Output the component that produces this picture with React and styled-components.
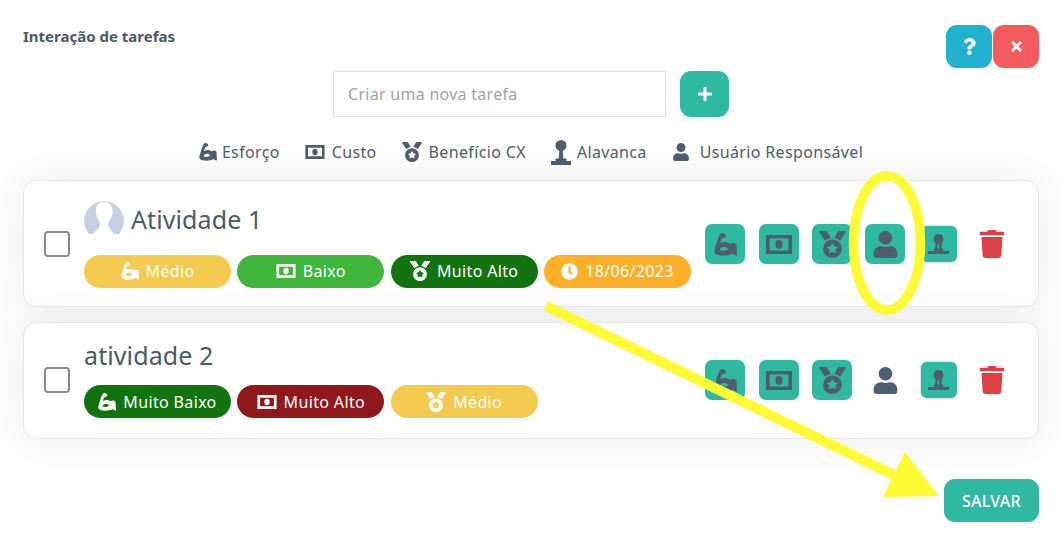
import React from "react";
import styled, { createGlobalStyle } from "styled-components";
import { FaMedal, FaUser, FaTrash, FaClock, FaPlus, FaTimes, FaQuestion } from "react-icons/fa";

const Global = createGlobalStyle`
  html, body { margin: 0; padding: 0; background: #fff; }
  body { font-family: "Noto Sans", "Open Sans", sans-serif; color: #4a5a6b; overflow: hidden; }
  * { box-sizing: border-box; }
  input::placeholder { color: #a0a3a6; opacity: 1; }
`;

const Page = styled.div`
  position: relative;
  width: 1060px;
  height: 546px;
  padding: 25px 21px 24px 23px;
  display: flex;
  flex-direction: column;
  overflow: hidden;
`;
const Header = styled.header`
  display: flex;
  justify-content: space-between;
  align-items: flex-start;
  height: 46px;
`;
const Heading = styled.h1`
  margin: 2px 0 0;
  font-size: 15px;
  line-height: 18px;
  font-weight: 700;
  color: #4b5968;
`;
const HeaderButtons = styled.div`
  display: flex;
  gap: 1px;
`;
const SquareButton = styled.button`
  width: ${(p) => p.$w}px;
  height: ${(p) => p.$h}px;
  border: 0;
  border-radius: 11px;
  padding: 0;
  background: ${(p) => p.$bg};
  color: #fff;
  display: flex;
  align-items: center;
  justify-content: center;
  font-size: ${(p) => p.$size}px;
`;
const NewTask = styled.div`
  display: flex;
  justify-content: center;
  gap: 14px;
`;
const TaskInput = styled.input`
  width: 333px;
  height: 46px;
  border: 1px solid #dfe1e5;
  padding: 0 14px;
  font: 400 16px "Noto Sans", sans-serif;
  letter-spacing: 0.28px;
  background: #fff;
  outline: 0;
`;
const Legend = styled.div`
  display: flex;
  justify-content: center;
  align-items: center;
  gap: 25px;
  height: 24px;
  margin-top: 23px;
  margin-bottom: 16px;
`;
const LegendItem = styled.span`
  display: flex;
  align-items: center;
  gap: ${(p) => p.$gap || 7}px;
  font-size: 16px;
  letter-spacing: 0.35px;
  color: #4f5e6e;
  white-space: nowrap;
`;
const CardList = styled.div`
  display: flex;
  flex-direction: column;
  gap: 15px;
`;
const Card = styled.article`
  display: flex;
  align-items: center;
  height: ${(p) => p.$h}px;
  padding: ${(p) => p.$pt}px 26px ${(p) => p.$pb}px 20px;
  background: #fff;
  border: 1px solid #e6e7e9;
  border-radius: 13px;
  box-shadow: 0 0 50px rgba(0, 0, 0, 0.08);
`;
const Check = styled.span`
  flex: none;
  width: 26px;
  height: 26px;
  border: 2px solid #8b8b8b;
  border-radius: 4px;
  background: #fff;
`;
const Content = styled.div`
  flex: 1;
  margin: 0 14px;
  display: flex;
  flex-direction: column;
  gap: 14px;
`;
const TitleRow = styled.div`
  display: flex;
  align-items: center;
  gap: 7px;
`;
const Title = styled.h2`
  margin: 0;
  padding-bottom: 2px;
  font-size: 25px;
  line-height: 27px;
  font-weight: 400;
  letter-spacing: 0.1px;
  color: #4a5a6b;
`;
const Tags = styled.div`
  display: flex;
  gap: 6.33px;
`;
const Tag = styled.span`
  width: 147px;
  height: 33px;
  border-radius: 17px;
  background: ${(p) => p.$bg};
  color: #fff;
  display: flex;
  align-items: center;
  justify-content: center;
  gap: 7px;
  font-size: 16px;
  letter-spacing: 0.35px;
  white-space: nowrap;
`;
const Actions = styled.div`
  display: flex;
  align-items: center;
  gap: 13.33px;
`;
const ActionButton = styled.button`
  flex: none;
  width: 40px;
  height: 40px;
  padding: 0;
  border: 0;
  border-radius: 7px;
  background: ${(p) => (p.$plain ? "transparent" : "#2fb9a1")};
  color: #4f5e6e;
  display: flex;
  align-items: center;
  justify-content: center;
`;
const StampButton = styled(ActionButton)`
  width: 38px;
  height: 38px;
  margin: 0 1px;
  border: 1px solid #dfe7e6;
`;
const TrashButton = styled(ActionButton)`
  background: transparent;
  color: #dc4045;
`;
const Footer = styled.div`
  margin-top: auto;
  display: flex;
  justify-content: flex-end;
`;
const SaveButton = styled.button`
  width: 95px;
  height: 43px;
  border: 0;
  border-radius: 11px;
  background: #2fb9a1;
  color: #fff;
  font: 500 16px "Noto Sans", sans-serif;
  letter-spacing: 0.3px;
`;
const Annotation = styled.svg`
  position: absolute;
  inset: 0;
  pointer-events: none;
`;

const Biceps = ({ size = 18 }) => (
  <svg width={size} height={size} viewBox="0 0 66 65" fill="currentColor">
    <path
      fillRule="evenodd"
      d="M20 0C27-1 34 2 34 8C34 12 28 13 24 15C20 18 19 24 19 29C26 24 38 24 46 31C50 26 60 26 64 32L66 64L57 62L55 58C40 66 14 66 6 60C0 56 0 48 4 40C8 26 12 8 20 0ZM18 44C26 37 36 38 41 46C33 51 24 52 18 49Z"
    />
  </svg>
);
const Money = ({ size = 20, h = 15 }) => (
  <svg width={size} height={h} viewBox="0 0 26 19" fill="currentColor">
    <path fillRule="evenodd" d="M0 0h26v19H0zM3.600 3.600v11.800h18.800V3.600z" />
    <ellipse cx="13" cy="9.500" rx="3.600" ry="4.400" />
  </svg>
);
const Stamp = () => (
  <svg width="21" height="20" viewBox="0 0 21 20" fill="currentColor">
    <circle cx="10.500" cy="5" r="5" />
    <path d="M7.500 9h2.200v6H7zM11.300 9h2.200l.5 6h-2.700zM6 14.500h9V17H6zM0 17h21v3H0z" />
  </svg>
);
const TallStamp = () => (
  <svg width="20" height="25" viewBox="0 0 20 25" fill="currentColor">
    <circle cx="10" cy="5.500" r="5.500" />
    <path d="M8.300 10h3.400l.6 9H7.700zM4.500 18.500h11V21h-11zM0 21h20v4H0z" />
  </svg>
);

const Avatar = () => (
  <svg width="40" height="40" viewBox="0 0 40 40" style={{ flex: "none" }}>
    <path d="M20 0a20 20 0 0 1 15.100 33H4.900A20 20 0 0 1 20 0z" fill="#c5d0e3" />
    <path
      d="M20 1C13 1 11.500 7 12 12C12.500 16 14 19 15.500 21C16.500 23 16 26 14 28C12 30 10 31 9 33H30C29 31 27 30 26 28C24 26 23.500 23 24.500 21C26 19 28 16 28.500 12C29 7 27 1 20 1Z"
      fill="#fff"
    />
  </svg>
);

const tagIcon = {
  effort: <Biceps size={18} />,
  cost: <Money size={20} h={14} />,
  benefit: <FaMedal size={20} />,
  date: <FaClock size={17} />,
};

const tasks = [
  {
    h: 127,
    pt: 1,
    pb: 0,
    title: "Atividade 1",
    avatar: true,
    tags: [
      ["effort", "Médio", "#f4cb50"],
      ["cost", "Baixo", "#40b63c"],
      ["benefit", "Muito Alto", "#13730f"],
      ["date", "18/06/2023", "#ffb02a"],
    ],
  },
  {
    h: 117,
    pt: 0,
    pb: 1,
    title: "atividade 2",
    plainUser: true,
    tags: [
      ["effort", "Muito Baixo", "#13730f"],
      ["cost", "Muito Alto", "#8e181c"],
      ["benefit", "Médio", "#f4cb50"],
    ],
  },
];

const legend = [
  [<Biceps size={18} />, "Esforço", 5],
  [<Money size={20} h={14} />, "Custo", 7],
  [<FaMedal size={20} />, "Benefício CX", 7],
  [<TallStamp />, "Alavanca", 6],
  [<FaUser size={18} />, "Usuário Responsável", 10],
];

export default function App() {
  return (
    <Page>
      <Global />
      <Header>
        <Heading>Interação de tarefas</Heading>
        <HeaderButtons>
          <SquareButton $w={46} $h={43} $bg="#22b1cf" $size={17}><FaQuestion /></SquareButton>
          <SquareButton $w={46} $h={43} $bg="#f45b5f" $size={15}><FaTimes /></SquareButton>
        </HeaderButtons>
      </Header>
      <NewTask>
        <TaskInput placeholder="Criar uma nova tarefa" />
        <SquareButton $w={49} $h={46} $bg="#2fb9a1" $size={16}><FaPlus /></SquareButton>
      </NewTask>
      <Legend>
        {legend.map(([icon, label, gap]) => (
          <LegendItem key={label} $gap={gap}>{icon}{label}</LegendItem>
        ))}
      </Legend>
      <CardList>
        {tasks.map((t) => (
          <Card key={t.title} $h={t.h} $pt={t.pt} $pb={t.pb}>
            <Check />
            <Content>
              <TitleRow>
                {t.avatar && <Avatar />}
                <Title>{t.title}</Title>
              </TitleRow>
              <Tags>
                {t.tags.map(([kind, label, bg]) => (
                  <Tag key={kind} $bg={bg}>{tagIcon[kind]}{label}</Tag>
                ))}
              </Tags>
            </Content>
            <Actions>
              <ActionButton><Biceps size={23} /></ActionButton>
              <ActionButton><Money size={26} h={19} /></ActionButton>
              <ActionButton><FaMedal size={27} /></ActionButton>
              <ActionButton $plain={t.plainUser}><FaUser size={27} /></ActionButton>
              <StampButton><Stamp /></StampButton>
              <TrashButton><FaTrash size={28} /></TrashButton>
            </Actions>
          </Card>
        ))}
      </CardList>
      <Footer><SaveButton>SALVAR</SaveButton></Footer>
      <Annotation width="1060" height="546" viewBox="0 0 1060 546">
        <ellipse cx="887" cy="243" rx="33.500" ry="67" fill="none" stroke="#fdfb33" strokeWidth="9.500" />
        <path d="M546 306L900 478" stroke="#fdfb33" strokeWidth="10" fill="none" />
        <path d="M905 452L883 497L939 496z" fill="#fdfb33" />
      </Annotation>
    </Page>
  );
}
